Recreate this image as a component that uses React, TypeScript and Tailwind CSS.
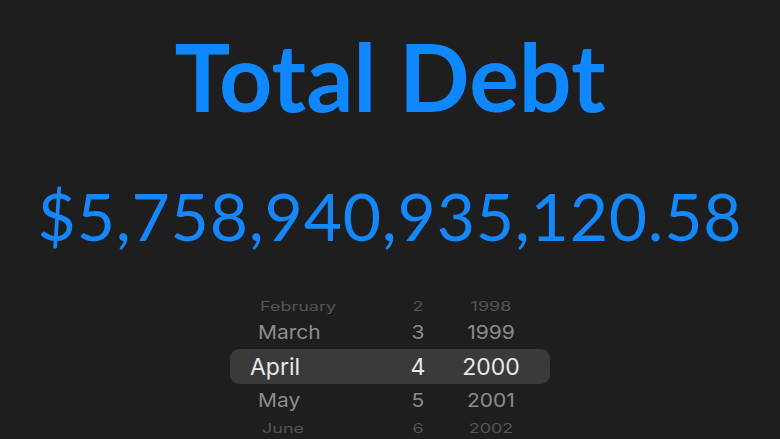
import React from "react";

export default function App() {
  const rows = [
    { m: "February", d: "2", y: "1998", cls: "h-[22px] pl-[30px] text-[18px] text-[#555555] [transform:scaleY(0.7)]", mw: "w-[130px]" },
    { m: "March", d: "3", y: "1999", cls: "h-[32px] pl-[28px] text-[21px] text-[#8c8c8c] [transform:scaleY(0.92)]", mw: "w-[132px]" },
    { m: "April", d: "4", y: "2000", cls: "h-[36px] pl-[20px] text-[23px] text-[#e8e8e8]", mw: "w-[140px]" },
    { m: "May", d: "5", y: "2001", cls: "h-[32px] pl-[28px] text-[21px] text-[#8c8c8c] [transform:scaleY(0.92)]", mw: "w-[132px]" },
    { m: "June", d: "6", y: "2002", cls: "h-[22px] pl-[32px] text-[18px] text-[#555555] [transform:scaleY(0.7)]", mw: "w-[128px]" },
  ];
  return (
    <div className="w-[780px] h-[439px] bg-[#1e1e1e] overflow-hidden flex flex-col items-center">
      <div className="mt-[30px] h-[93px] text-[93px] leading-[93px] font-bold text-[#0f87ff] font-['Lato',sans-serif]">
        Total Debt
      </div>
      <div className="mt-[60px] h-[66px] text-[66px] leading-[66px] font-normal text-[#1487fa] font-['Lato',sans-serif] tracking-[0.8px]">
        $5,758,940,935,120.58
      </div>
      <div className="mt-[46px] w-[320px] relative flex flex-col font-['Inter',sans-serif]">
        <div className="absolute left-0 right-0 top-[54px] h-[35px] rounded-[9px] bg-[#3a3a3a]" />
        {rows.map((r) => (
          <div key={r.m} className={`relative flex items-center ${r.cls}`}>
            <span className={r.mw}>{r.m}</span>
            <span className="w-[56px] text-center">{r.d}</span>
            <span className="w-[90px] text-center">{r.y}</span>
          </div>
        ))}
      </div>
    </div>
  );
}
